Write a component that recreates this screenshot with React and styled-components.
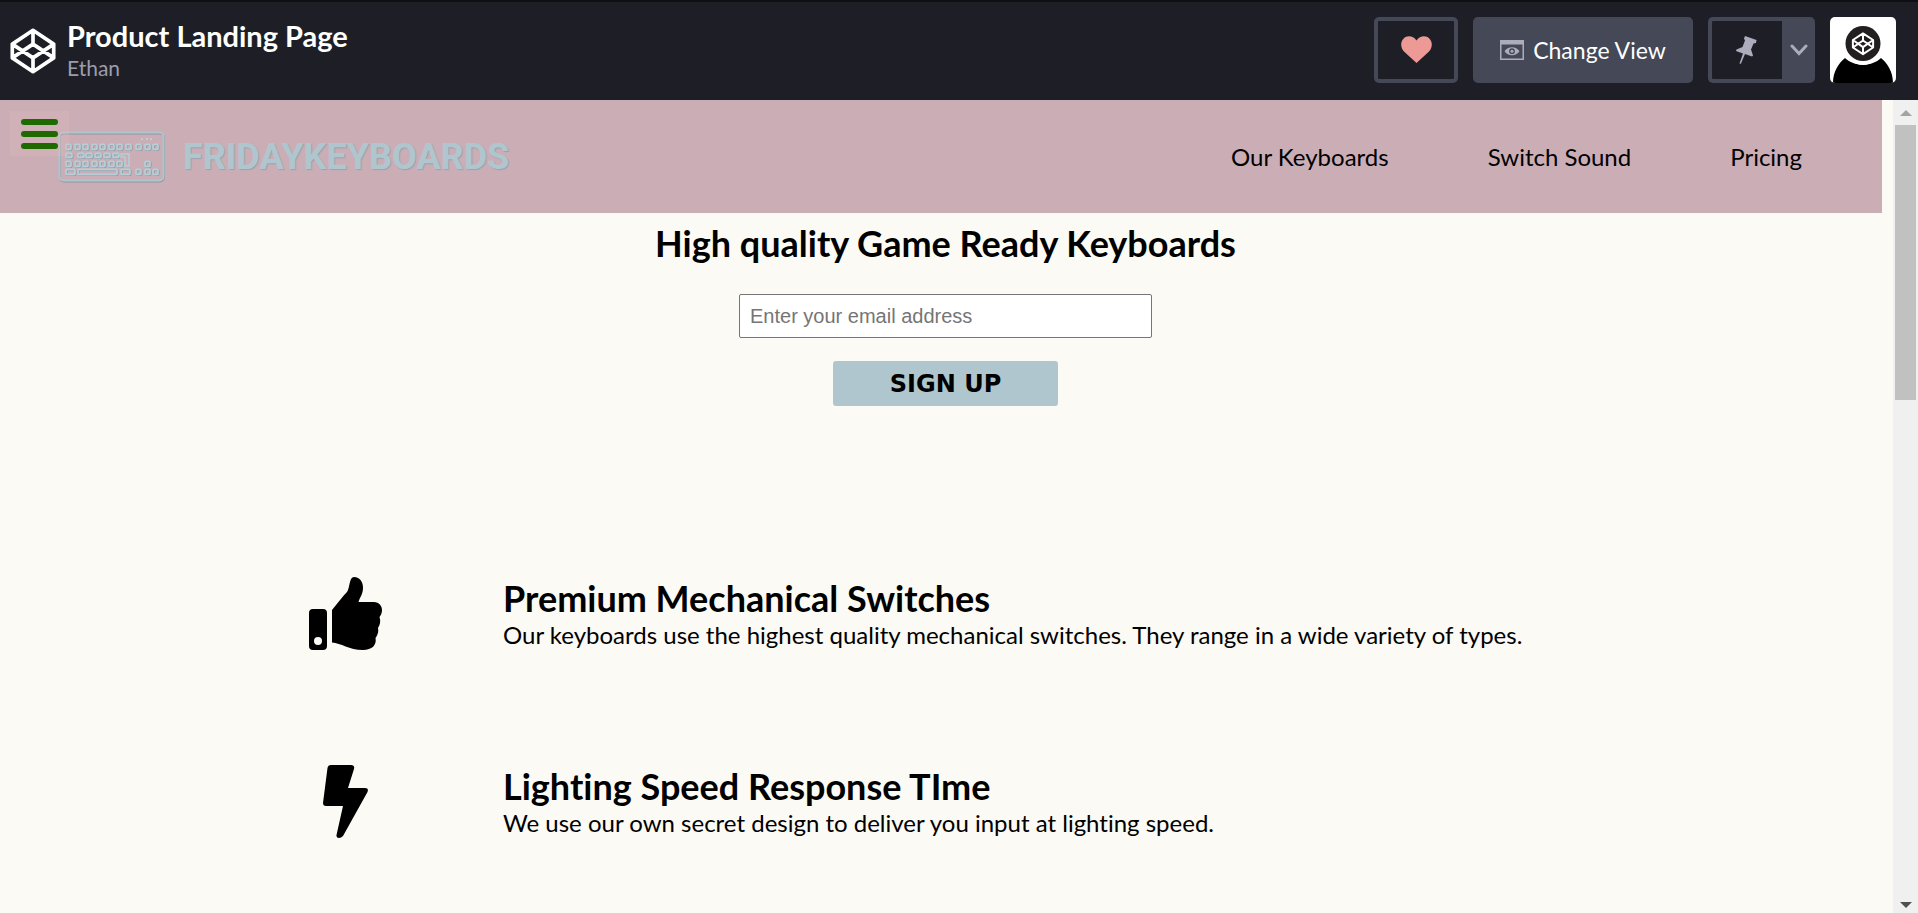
import React from 'react';
import styled, { createGlobalStyle } from 'styled-components';

const Global = createGlobalStyle`
  *, *::before, *::after { box-sizing: border-box; }
  body { margin: 0; font-family: Lato, sans-serif; font-variant-ligatures: none; background: #fbfaf4; color: #000; }
  h1, h2, p, ul { margin: 0; padding: 0; }
  a { color: inherit; text-decoration: none; }
  button { cursor: pointer; }
  svg { display: block; }
`;

const Shell = styled.div`
  display: flex;
  flex-direction: column;
  height: 100vh;
  overflow: hidden;
`;

const TopBar = styled.header`
  flex: none;
  display: flex;
  align-items: center;
  justify-content: space-between;
  height: 100px;
  padding: 0 22px 0 10px;
  background: #1e1f26;
  border-top: 2px solid #0c1012;
`;

const PenInfo = styled.div`
  display: flex;
  align-items: center;
  gap: 11px;
`;

const PenTitle = styled.h1`
  font-size: 29px;
  line-height: 36px;
  font-weight: 700;
  color: #fff;
`;

const PenAuthor = styled.a`
  display: block;
  padding-bottom: 2px;
  font-size: 21px;
  line-height: 28px;
  color: #9b9dad;
`;

const Controls = styled.div`
  display: flex;
  gap: 15px;
  padding-bottom: 2px;
`;

const BarButton = styled.button`
  display: flex;
  align-items: center;
  justify-content: center;
  gap: 9px;
  height: 66px;
  width: ${(p) => p.$width}px;
  padding: 0;
  font-family: Lato, sans-serif;
  font-size: 23px;
  color: ${(p) => (p.$filled ? '#fff' : '#abadbc')};
  background: ${(p) => (p.$filled ? '#444857' : '#1e1f26')};
  border: 4px solid #444857;
  border-right-width: ${(p) => (p.$joined ? 0 : 4)}px;
  border-radius: ${(p) => p.$radius || '5px'};
`;

const SplitButton = styled.div`
  display: flex;
`;

const Avatar = styled.a`
  display: block;
  width: 66px;
  height: 66px;
  border-radius: 5px;
  overflow: hidden;
  background: #fff;
`;

const Viewport = styled.div`
  flex: 1;
  min-height: 0;
  display: flex;
`;

const Page = styled.main`
  flex: 1;
  min-width: 0;
  position: relative;
  overflow: hidden;
`;

const ScrollTrack = styled.div`
  flex: none;
  display: flex;
  flex-direction: column;
  justify-content: space-between;
  width: 25px;
  padding: 0 2px;
  background: #f0f0f0;
`;

const ScrollThumb = styled.div`
  height: 275px;
  background: #c1c1c1;
`;

const ScrollArrow = styled.div`
  display: flex;
  align-items: center;
  justify-content: center;
  height: 25px;
  padding-top: ${(p) => (p.$down ? 8 : 0)}px;
  color: ${(p) => (p.$down ? '#505050' : '#a3a3a3')};
`;

const MenuButton = styled.button`
  position: absolute;
  left: 10px;
  top: 11px;
  display: flex;
  flex-direction: column;
  justify-content: center;
  align-items: center;
  gap: 6px;
  width: 59px;
  height: 45px;
  padding: 0;
  border: 0;
  background: rgba(222, 190, 184, 0.3);
`;

const MenuLine = styled.span`
  width: 37px;
  height: 6px;
  border-radius: 3px;
  background: #1e6900;
`;

const SiteHeader = styled.div`
  display: flex;
  align-items: center;
  justify-content: space-between;
  height: 113px;
  margin-right: 11px;
  padding: 0 80px 0 58px;
  background: #cbadb6;
`;

const Brand = styled.a`
  display: flex;
  align-items: center;
  gap: 18px;
`;

const BrandName = styled.span`
  font-family: Roboto, sans-serif;
  font-weight: 700;
  font-size: 36px;
  line-height: 48px;
  color: #b0c6ce;
  text-shadow: 1px 1px 1px #98a3ab;
`;

const NavList = styled.ul`
  display: flex;
  gap: 99px;
  list-style: none;
  font-size: 24px;
  line-height: 30px;
`;

const Hero = styled.section`
  display: flex;
  flex-direction: column;
  align-items: center;
  padding: 8px 2px 0 0;
`;

const Heading = styled.h2`
  font-size: 36px;
  line-height: 44px;
  font-weight: 700;
`;

const SignupForm = styled.form`
  display: flex;
  flex-direction: column;
  align-items: center;
  gap: 23px;
  padding-top: 29px;
`;

const EmailInput = styled.input`
  width: 413px;
  height: 44px;
  padding: 0 10px;
  font-family: "Liberation Sans", sans-serif;
  font-size: 20px;
  border: 1px solid #767676;
  border-radius: 2px;
  background: #fff;
  &::placeholder { color: #757575; }
`;

const SubmitButton = styled.button`
  width: 225px;
  height: 45px;
  padding: 0;
  border: 0;
  border-radius: 3px;
  font-family: "DejaVu Sans", sans-serif;
  font-weight: 900;
  font-size: 24px;
  color: #000;
  background: #b0c6ce;
`;

const Features = styled.section`
  padding: 113px 188px 0 187px;
`;

const Feature = styled.article`
  display: flex;
  align-items: center;
  height: 188px;
`;

const FeatureIcon = styled.div`
  flex: none;
  display: flex;
  justify-content: center;
  width: 316px;
`;

const FeatureText = styled.p`
  font-size: 24px;
  line-height: 30px;
`;

const Cube = ({ size, color = '#fff', width = 8 }) => (
  <svg width={size} height={size} viewBox="0 0 100 100" fill="none" stroke={color} strokeWidth={width} strokeLinejoin="round" strokeLinecap="round" aria-hidden="true">
    <path d="M50 5 95 35V65L50 95 5 65V35Z M50 5V35 M50 65V95 M5 35 50 65 95 35 M5 65 50 35 95 65" />
  </svg>
);

const Heart = () => (
  <svg width="31" height="28" viewBox="0 0 31 28" fill="#ed9a97" aria-hidden="true">
    <path d="M15.500 27L3 15.500C-.5 12-.8 6 2.500 2.700C6-.8 12-.5 15.500 4.500C19-.5 25-.8 28.500 2.700C31.800 6 31.500 12 28 15.500Z" />
  </svg>
);

const ViewIcon = () => (
  <svg width="24" height="20" viewBox="0 0 24 20" aria-hidden="true">
    <path fill="#abadbc" fillRule="evenodd" d="M0 0H24V20H0ZM1.500 4.500V18.500H22.500V4.500Z" />
    <path fill="#abadbc" fillRule="evenodd" d="M4.500 11.200C8 5.800 16 5.800 19.500 11.200C16 16.500 8 16.500 4.500 11.200ZM12 8.300A2.900 2.900 0 1 0 12 14.100A2.900 2.900 0 1 0 12 8.300Z" />
    <circle cx="12" cy="11.200" r="1.500" fill="#abadbc" />
  </svg>
);

const PinIcon = () => (
  <svg width="22" height="28" viewBox="0 0 22 28" fill="#abadbc" aria-hidden="true">
    <path d="M9 0 20.500 4 20 7 17.500 7.500 15 13.500 17 19.500 16 20.500 9 18 5 27.500 3.500 28 4 26 7 17.500 0 15 .5 13.500 6.500 11 9 4.500 8 2.500Z" />
  </svg>
);

const Chevron = () => (
  <svg width="18" height="12" viewBox="0 0 18 12" fill="none" stroke="#abadbc" strokeWidth="3" strokeLinecap="round" aria-hidden="true">
    <path d="M2 2 9 9.500 16 2" />
  </svg>
);

const AvatarArt = () => (
  <svg width="66" height="66" viewBox="0 0 66 66" aria-hidden="true">
    <path d="M3 66C3 54 9 46 15 41C24 50 42 50 51 41C57 46 63 54 63 66Z" />
    <circle cx="33" cy="26.500" r="21.500" fill="#fff" />
    <circle cx="33" cy="26.500" r="17.500" fill="#231f20" />
    <g transform="translate(22 16) scale(.22)" fill="none" stroke="#fff" strokeWidth="9" strokeLinejoin="round">
      <path d="M50 2 96 32V66L50 96 4 66V32Z M50 2V34 M50 64V96 M4 32 50 64 96 32 M4 66 50 34 96 66" />
    </g>
  </svg>
);

const keys = [];
[0, 9, 17, 26, 34, 43, 51, 60, 70, 79, 87].forEach((x) => keys.push([x, 12, 5, 5]));
[0, 12, 20, 29, 38, 47].forEach((x) => keys.push([x, 21, 6, 4]));
[0, 9, 17, 26, 34, 43, 51, 79].forEach((x) => keys.push([x, 29, 5, 5]));
[[0, 9], [12, 39], [55, 9], [70, 5], [79, 5], [87, 5]].forEach(([x, w]) => keys.push([x, 37, w, 5]));

const KeyboardArt = () => (
  <svg width="107" height="52" viewBox="0 0 107 52" fill="none" aria-hidden="true">
    <rect x="2" y="2.500" width="104" height="48" rx="4" stroke="#8f9aa3" strokeWidth="2" />
    <rect x="1.500" y="1.500" width="104" height="48" rx="4" stroke="#b0c6ce" strokeWidth="2" />
    {keys.map(([x, y, w, h]) => (
      <g key={`${x}-${y}`}>
        <rect x={x + 8.5} y={y + 2} width={w} height={h} rx="1" stroke="#87929c" strokeWidth="2" />
        <rect x={x + 8} y={y + 1.5} width={w} height={h} rx="1" stroke="#b5d0d8" strokeWidth="1.800" />
      </g>
    ))}
    <path d="M63 23H71V35H67V26H63Z" stroke="#b5d0d8" strokeWidth="1.500" />
    <path d="M83 8h2M88 8h2M92 8h2" stroke="#b5d0d8" strokeWidth="2" />
  </svg>
);

const ThumbIcon = () => (
  <svg width="73" height="73" viewBox="0 0 73 73" aria-hidden="true">
    <path fillRule="evenodd" d="M4 32H14Q18 32 18 36V69Q18 73 14 73H4Q0 73 0 69V36Q0 32 4 32ZM9 60A4 4 0 1 0 9 68A4 4 0 1 0 9 60Z" />
    <path d="M23 33C27 28 34 19 38 15C41 11 40 0 45 0C51 0 54 5 54 11C54 17 51 20 49.500 25H65C70 25 73 29 73 33C73 36 72 38 70.500 40C72 44 71 48 69 51C70 55 68 59 66.500 61C68 68 63 73 54 73C40 73 32 66 23 65.500Z" />
  </svg>
);

const BoltIcon = () => (
  <svg width="45" height="73" viewBox="0 0 45 73" aria-hidden="true">
    <path d="M8 0H28Q32 0 31 4L25 23H42Q46 23 44.500 27L20 71Q18 73 16 73Q13 73 13.500 70L20 41H3Q0 41 0 38L4.500 3Q5 0 8 0Z" />
  </svg>
);

const NAV = ['Our Keyboards', 'Switch Sound', 'Pricing'];

const FEATURES = [
  {
    title: 'Premium Mechanical Switches',
    text: 'Our keyboards use the highest quality mechanical switches. They range in a wide variety of types.',
    Icon: ThumbIcon,
  },
  {
    title: 'Lighting Speed Response TIme',
    text: 'We use our own secret design to deliver you input at lighting speed.',
    Icon: BoltIcon,
  },
];

export default function App() {
  return (
    <Shell>
      <Global />
      <TopBar>
        <PenInfo>
          <a href="#home" aria-label="Home"><Cube size={46} /></a>
          <div>
            <PenTitle>Product Landing Page</PenTitle>
            <PenAuthor href="#author">Ethan</PenAuthor>
          </div>
        </PenInfo>
        <Controls>
          <BarButton $width={84} aria-label="Love"><Heart /></BarButton>
          <BarButton $width={220} $filled><ViewIcon />Change View</BarButton>
          <SplitButton>
            <BarButton $width={74} $joined $radius="5px 0 0 5px" aria-label="Pin"><PinIcon /></BarButton>
            <BarButton $width={33} $filled $radius="0 5px 5px 0" aria-label="Pin options"><Chevron /></BarButton>
          </SplitButton>
          <Avatar href="#profile" aria-label="Profile"><AvatarArt /></Avatar>
        </Controls>
      </TopBar>
      <Viewport>
        <Page>
          <SiteHeader>
            <Brand href="#top">
              <KeyboardArt />
              <BrandName>FRIDAYKEYBOARDS</BrandName>
            </Brand>
            <nav>
              <NavList>
                {NAV.map((item) => <li key={item}><a href="#section">{item}</a></li>)}
              </NavList>
            </nav>
          </SiteHeader>
          <MenuButton aria-label="Menu"><MenuLine /><MenuLine /><MenuLine /></MenuButton>
          <Hero>
            <Heading>High quality Game Ready Keyboards</Heading>
            <SignupForm>
              <EmailInput type="email" aria-label="Email address" placeholder="Enter your email address" />
              <SubmitButton type="submit">SIGN UP</SubmitButton>
            </SignupForm>
          </Hero>
          <Features>
            {FEATURES.map(({ title, text, Icon }) => (
              <Feature key={title}>
                <FeatureIcon><Icon /></FeatureIcon>
                <div>
                  <Heading>{title}</Heading>
                  <FeatureText>{text}</FeatureText>
                </div>
              </Feature>
            ))}
          </Features>
        </Page>
        <ScrollTrack aria-hidden="true">
          <div>
            <ScrollArrow><svg width="12" height="6" viewBox="0 0 12 6" fill="currentColor"><path d="M0 6 6 0 12 6Z" /></svg></ScrollArrow>
            <ScrollThumb />
          </div>
          <ScrollArrow $down><svg width="12" height="6" viewBox="0 0 12 6" fill="currentColor"><path d="M0 0 6 6 12 0Z" /></svg></ScrollArrow>
        </ScrollTrack>
      </Viewport>
    </Shell>
  );
}
